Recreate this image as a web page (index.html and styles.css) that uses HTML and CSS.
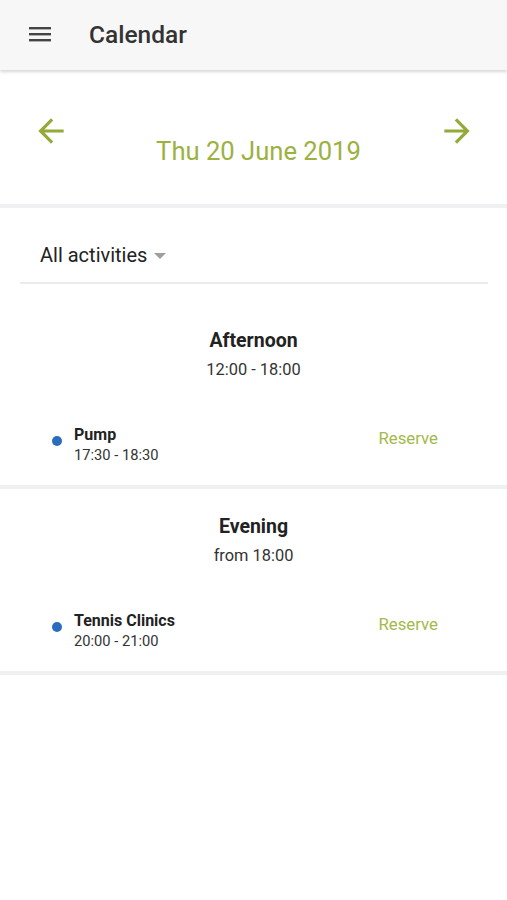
FILE: index.html
```html
<!DOCTYPE html>
<html lang="en">
<head>
    <meta charset="UTF-8">
    <meta name="viewport" content="width=device-width, initial-scale=1.0">
    <title>Calendar</title>
    <link rel="stylesheet" href="styles.css">
</head>
<body>
    <header class="topbar">
        <svg class="menu-icon" width="22" height="16" viewBox="0 0 22 16">
            <rect x="0" y="0" width="22" height="2.4" fill="#444"/>
            <rect x="0" y="6" width="22" height="2.4" fill="#444"/>
            <rect x="0" y="12" width="22" height="2.4" fill="#444"/>
        </svg>
        <h1 class="title">Calendar</h1>
    </header>

    <div class="date-nav">
        <svg class="arrow" width="38" height="38" viewBox="0 0 24 24">
            <path d="M20 11H7.83l5.59-5.59L12 4l-8 8 8 8 1.41-1.41L7.83 13H20v-2z"/>
        </svg>
        <div class="date">Thu 20 June 2019</div>
        <svg class="arrow" width="38" height="38" viewBox="0 0 24 24">
            <path d="M4 11h12.17l-5.59-5.59L12 4l8 8-8 8-1.41-1.41L16.17 13H4v-2z"/>
        </svg>
    </div>

    <div class="filter">
        <div class="filter-select">
            <span>All activities</span>
            <span class="caret"></span>
        </div>
    </div>

    <section class="period">
        <h2>Afternoon</h2>
        <div class="period-time">12:00 - 18:00</div>
        <div class="activity">
            <span class="dot"></span>
            <div class="activity-info">
                <div class="activity-name">Pump</div>
                <div class="activity-time">17:30 - 18:30</div>
            </div>
            <a class="reserve" href="#">Reserve</a>
        </div>
    </section>

    <section class="period">
        <h2>Evening</h2>
        <div class="period-time">from 18:00</div>
        <div class="activity">
            <span class="dot"></span>
            <div class="activity-info">
                <div class="activity-name">Tennis Clinics</div>
                <div class="activity-time">20:00 - 21:00</div>
            </div>
            <a class="reserve" href="#">Reserve</a>
        </div>
    </section>
</body>
</html>
```

FILE: styles.css
```css
body {
    margin: 0;
    padding: 0;
    font-family: Roboto, "Liberation Sans", sans-serif;
    background-color: #fff;
    color: #222;
}

.topbar {
    height: 70px;
    display: flex;
    align-items: center;
    padding-left: 29px;
    background-color: #f7f7f7;
    box-shadow: 0 2px 3px rgba(0, 0, 0, 0.16);
    position: relative;
}

.menu-icon {
    display: block;
}

.title {
    margin: 0 0 2px 38px;
    font-size: 24.5px;
    font-weight: 500;
    color: #333;
}

.date-nav {
    height: 138px;
    box-sizing: border-box;
    padding: 42px 31px 0 32px;
    display: flex;
    align-items: flex-start;
    justify-content: space-between;
    border-bottom: 4px solid #eff0f2;
}

.arrow {
    fill: #94aa38;
}

.date {
    margin-top: 24px;
    margin-left: 9px;
    font-size: 25.6px;
    line-height: 30px;
    color: #9cb13f;
}

.filter {
    margin: 0 19px 19px 20px;
    padding: 35px 0 15px 20px;
    border-bottom: 2px solid #ebebeb;
}

.filter-select {
    display: flex;
    align-items: center;
    font-size: 20px;
    line-height: 24px;
    color: #222;
}

.caret {
    margin-left: 7px;
    margin-top: 2px;
    width: 0;
    height: 0;
    border-left: 6px solid transparent;
    border-right: 6px solid transparent;
    border-top: 6px solid #9e9e9e;
}

.period {
    padding: 26px 0 19px;
    border-bottom: 4px solid #eff0f2;
}

.period h2 {
    margin: 0;
    text-align: center;
    font-size: 19.5px;
    line-height: 24px;
    font-weight: 700;
    color: #222;
}

.period-time {
    margin-top: 7px;
    text-align: center;
    font-size: 16.4px;
    line-height: 20px;
    color: #333;
}

.activity {
    margin-top: 45px;
    display: flex;
    align-items: flex-start;
    padding: 0 69px 0 52px;
}

.dot {
    width: 10px;
    height: 10px;
    border-radius: 50%;
    background-color: #2b6cbf;
    margin: 11px 12px 0 0;
}

.activity-name {
    font-size: 16px;
    line-height: 20px;
    font-weight: 700;
    color: #222;
}

.activity-time {
    font-size: 14.7px;
    line-height: 21px;
    color: #333;
}

.reserve {
    margin-left: auto;
    margin-top: 3px;
    font-size: 16.8px;
    line-height: 20px;
    color: #a3b94a;
    text-decoration: none;
}
```
